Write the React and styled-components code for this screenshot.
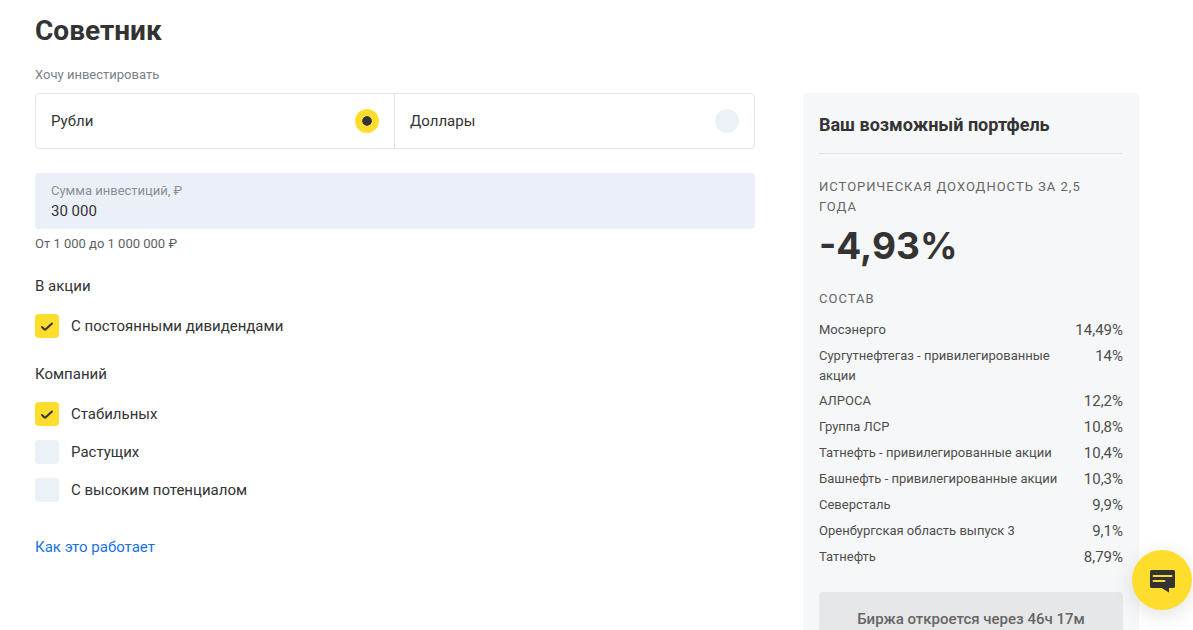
import React from 'react';
import styled, { createGlobalStyle } from 'styled-components';

const GlobalStyle = createGlobalStyle`
	*,
	*::before,
	*::after {
		box-sizing: border-box;
	}

	body {
		margin: 0;
		background: #fff;
		color: #333;
		font-family: Roboto, "Liberation Sans", sans-serif;
		font-size: 15px;
		line-height: 24px;
	}
`;

const Page = styled.main`
	padding: 13px 54px 24px 35px;
`;

const Title = styled.h1`
	margin: 0 0 16px;
	font-size: 28px;
	font-weight: 700;
	line-height: 36px;
`;

const Layout = styled.div`
	display: grid;
	grid-template-columns: minmax(0, 15fr) minmax(0, 7fr);
	column-gap: 48px;
	align-items: start;
`;

const Group = styled.fieldset`
	min-width: 0;
	margin: 0 0 ${({ $gap }) => $gap}px;
	padding: 0;
	border: 0;
`;

const SmallLegend = styled.legend`
	padding: 0 0 8px;
	font-size: 13px;
	line-height: 20px;
	color: #79818c;
`;

const Legend = styled.legend`
	padding: 0 0 16px;
`;

const Segments = styled.div`
	display: grid;
	grid-template-columns: 1fr 1fr;
	border: 1px solid #e4e5e6;
	border-radius: 4px;
`;

const Segment = styled.label`
	display: flex;
	align-items: center;
	justify-content: space-between;
	padding: 15px;
	cursor: pointer;

	&:not(:last-child) {
		border-right: 1px solid #e4e5e6;
	}
`;

const Radio = styled.input`
	appearance: none;
	width: 24px;
	height: 24px;
	margin: 0;
	border: 7px solid #ecf1f7;
	border-radius: 50%;
	background: #ecf1f7;
	cursor: pointer;

	&:checked {
		border-color: #ffdd2d;
		background: #333 padding-box;
	}
`;

const Field = styled.label`
	display: block;
	padding: 8px 16px;
	border-radius: 4px;
	background: #ebeff7;
`;

const FieldLabel = styled.span`
	display: block;
	font-size: 13px;
	line-height: 20px;
	color: #8b8f95;
`;

const FieldInput = styled.input`
	display: block;
	width: 100%;
	height: 20px;
	padding: 0;
	border: 0;
	outline: 0;
	background: transparent;
	color: #333;
	font: inherit;
`;

const Hint = styled.p`
	margin: 5px 0 20px;
	font-size: 13px;
	line-height: 20px;
	color: #5c5f63;
`;

const Options = styled.div`
	display: grid;
	gap: 14px;
`;

const Option = styled.label`
	display: flex;
	align-items: center;
	gap: 12px;
	cursor: pointer;
`;

const CheckBox = styled.span`
	display: grid;
	width: 24px;
	height: 24px;

	> * {
		grid-area: 1 / 1;
	}
`;

const CheckInput = styled.input`
	appearance: none;
	width: 24px;
	height: 24px;
	margin: 0;
	border-radius: 4px;
	background: #ecf1f7;
	cursor: pointer;

	&:checked {
		background: #ffdd2d;
	}

	&:not(:checked) + svg {
		display: none;
	}
`;

const CheckMark = styled.svg`
	z-index: 1;
	pointer-events: none;
`;

const Link = styled.a`
	color: #1771e6;
	text-decoration: none;
`;

const Portfolio = styled.aside`
	margin-top: 28px;
	padding: 20px 16px 24px;
	border-radius: 4px;
	background: #f6f7f9;
`;

const PortfolioTitle = styled.h2`
	margin: 0 0 23px;
	padding-bottom: 16px;
	border-bottom: 1px solid #e1e3e6;
	font-size: 18px;
	font-weight: 700;
	line-height: 24px;
`;

const Caption = styled.h3`
	margin: 0;
	padding-right: 24px;
	font-size: 13px;
	font-weight: 400;
	line-height: 20px;
	letter-spacing: 1px;
	text-transform: uppercase;
	color: #666;
`;

const Yield = styled.p`
	margin: 5px 0 19px;
	font-family: Inter, "Liberation Sans", sans-serif;
	font-size: 37px;
	font-weight: 700;
	line-height: 48px;
`;

const Shares = styled.table`
	width: 100%;
	margin: 8px 0 22px;
	border-collapse: collapse;
	color: #4d4d4d;
`;

const ShareName = styled.th`
	padding: 3px 12px 2px 0;
	font-size: 13px;
	font-weight: 400;
	line-height: 20px;
	text-align: left;
	vertical-align: top;
`;

const ShareValue = styled.td`
	padding: 3px 0 2px;
	line-height: 21px;
	text-align: right;
	vertical-align: top;
`;

const BuyButton = styled.button`
	display: block;
	width: 100%;
	padding: 15px 16px 17px;
	border: 0;
	border-radius: 4px;
	background: #e6e7e8;
	color: #666;
	font: inherit;
	font-weight: 500;
`;

const ChatButton = styled.button`
	position: fixed;
	right: 1px;
	bottom: 20px;
	display: grid;
	place-items: center;
	width: 60px;
	height: 60px;
	padding: 0;
	border: 0;
	border-radius: 50%;
	background: #ffdd2d;
	box-shadow: 0 5px 20px rgba(0, 0, 0, .12);
	cursor: pointer;
`;

const currencies = [
	{ id: 'rub', name: 'Рубли' },
	{ id: 'usd', name: 'Доллары' }
];

const companies = [
	{ name: 'Стабильных', checked: true },
	{ name: 'Растущих', checked: false },
	{ name: 'С высоким потенциалом', checked: false }
];

const shares = [
	{ name: 'Мосэнерго', value: '14,49%' },
	{ name: 'Сургутнефтегаз - привилегированные акции', value: '14%' },
	{ name: 'АЛРОСА', value: '12,2%' },
	{ name: 'Группа ЛСР', value: '10,8%' },
	{ name: 'Татнефть - привилегированные акции', value: '10,4%' },
	{ name: 'Башнефть - привилегированные акции', value: '10,3%' },
	{ name: 'Северсталь', value: '9,9%' },
	{ name: 'Оренбургская область выпуск 3', value: '9,1%' },
	{ name: 'Татнефть', value: '8,79%' }
];

const CheckOption = ({ name, checked }) => (
	<Option>
		<CheckBox>
			<CheckInput type="checkbox" defaultChecked={checked} />
			<CheckMark width="24" height="24" viewBox="0 0 24 24" fill="none" aria-hidden="true">
				<path d="M7 13l2 2q1 1 2 0L17 9.500" stroke="#333" strokeWidth="2" strokeLinecap="round" />
			</CheckMark>
		</CheckBox>
		{name}
	</Option>
);

const App = () => {
	const [ currency, setCurrency ] = React.useState('rub');
	const [ amount, setAmount ] = React.useState('30 000');

	return (
		<Page>
			<GlobalStyle />
			<Title>Советник</Title>
			<Layout>
				<form>
					<Group $gap={24}>
						<SmallLegend>Хочу инвестировать</SmallLegend>
						<Segments>
							{currencies.map(({ id, name }) => (
								<Segment key={id}>
									{name}
									<Radio
										type="radio"
										name="currency"
										checked={currency === id}
										onChange={() => setCurrency(id)}
									/>
								</Segment>
							))}
						</Segments>
					</Group>
					<Field>
						<FieldLabel>Сумма инвестиций, ₽</FieldLabel>
						<FieldInput type="text" value={amount} onChange={(e) => setAmount(e.target.value)} />
					</Field>
					<Hint>От 1 000 до 1 000 000 ₽</Hint>
					<Group $gap={24}>
						<Legend>В акции</Legend>
						<Options>
							<CheckOption name="С постоянными дивидендами" checked />
						</Options>
					</Group>
					<Group $gap={33}>
						<Legend>Компаний</Legend>
						<Options>
							{companies.map((company) => <CheckOption key={company.name} {...company} />)}
						</Options>
					</Group>
					<Link href="#how">Как это работает</Link>
				</form>
				<Portfolio>
					<PortfolioTitle>Ваш возможный портфель</PortfolioTitle>
					<Caption>Историческая доходность за 2,5 года</Caption>
					<Yield>-4,93%</Yield>
					<Caption>Состав</Caption>
					<Shares>
						<tbody>
							{shares.map(({ name, value }) => (
								<tr key={name}>
									<ShareName scope="row">{name}</ShareName>
									<ShareValue>{value}</ShareValue>
								</tr>
							))}
						</tbody>
					</Shares>
					<BuyButton type="button">Биржа откроется через 46ч 17м</BuyButton>
				</Portfolio>
			</Layout>
			<ChatButton type="button" aria-label="Чат">
				<svg width="28" height="26" viewBox="0 0 28 26" aria-hidden="true">
					<path d="M3.500 3h22a1.500 1.500 0 0 1 1.500 1.500v15a1.500 1.500 0 0 1-1.500 1.500H21v4.500L13.500 21h-10A1.500 1.500 0 0 1 2 19.500v-15A1.500 1.500 0 0 1 3.500 3z" fill="#333" />
					<path d="M5.500 9h18M5.500 14h11" stroke="#ffdd2d" strokeWidth="2" strokeLinecap="round" />
				</svg>
			</ChatButton>
		</Page>
	);
};

export default App;
